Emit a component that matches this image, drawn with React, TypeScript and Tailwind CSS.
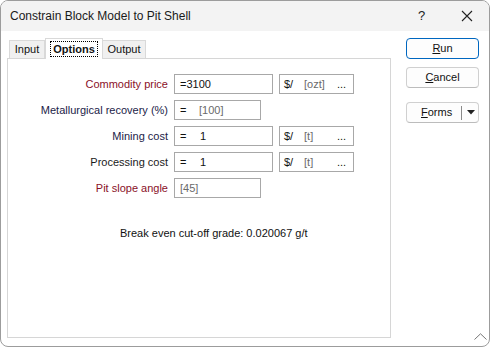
import React from "react";

const F = { fontFamily: '"Liberation Sans", Arial, sans-serif' };

function Row({ label, color, children }: { label: string; color: string; children: React.ReactNode }) {
  return (
    <div className="flex items-center h-[20px]">
      <div className={`w-[160px] text-right pr-[0px] text-[11px] leading-[13px] ${color}`}>{label}</div>
      <div className="flex ml-[6px] gap-[6px]">{children}</div>
    </div>
  );
}

function Box({ w, children }: { w: string; children: React.ReactNode }) {
  return (
    <div className={`${w} h-[20px] border border-[#a8a8a8] bg-white flex items-center text-[11px] leading-[13px] text-[#111]`}>
      {children}
    </div>
  );
}

function Unit({ u }: { u: string }) {
  return (
    <Box w="w-[75px]">
      <span className="ml-[4px] w-[20px]">$/</span>
      <span className="text-[#6a6a6a] w-[33px]">[{u}]</span>
      <span className="ml-[0px]">...</span>
    </Box>
  );
}

export default function App() {
  return (
    <div style={F} className="w-[490px] h-[347px] bg-white border border-[#9c9c9c] rounded-[8px] overflow-hidden flex flex-col relative text-[#111]">
      <div className="h-[30px] bg-[#f3f3f3] flex items-center pl-[9px] shrink-0 relative">
        <span className="text-[12px] leading-[14px] text-[#1a1a1a]">Constrain Block Model to Pit Shell</span>
        <span className="absolute left-[417px] top-[7px] text-[13px] leading-[15px] text-[#222]">?</span>
        <svg className="absolute left-[460px] top-[9px]" width="12" height="12" viewBox="0 0 12 12">
          <path d="M1 1 L11 11 M11 1 L1 11" stroke="#222" strokeWidth="1.1" />
        </svg>
      </div>
      <div className="flex flex-1">
        <div className="pl-[6px] pt-[7px]">
          <div className="flex items-end h-[20px] pl-[2px] relative z-10">
            <div className="h-[18px] w-[36px] bg-[#f0f0f0] border border-b-0 border-[#d9d9d9] flex items-center justify-center text-[11px]">Input</div>
            <div className="h-[21px] w-[58px] bg-white border border-b-0 border-[#d9d9d9] -mb-[1px] flex items-start justify-center pt-[2px]">
              <span className="border border-dotted border-black px-[2px] h-[16px] leading-[14px] text-[11px] font-bold">Options</span>
            </div>
            <div className="h-[18px] w-[43px] bg-[#f0f0f0] border border-b-0 border-l-0 border-[#d9d9d9] flex items-center justify-center text-[11px]">Output</div>
          </div>
          <div className="w-[384px] h-[280px] border border-[#d6d6d6] bg-white pt-[15px] flex flex-col">
            <div className="flex flex-col gap-[6px]">
              <Row label="Commodity price" color="text-[#8a1028]">
                <Box w="w-[99px]"><span className="ml-[5px]">=3100</span></Box>
                <Unit u="ozt" />
              </Row>
              <Row label="Metallurgical recovery (%)" color="text-[#1c1c48]">
                <Box w="w-[87px]"><span className="ml-[5px] w-[19px]">=</span><span className="text-[#6a6a6a]">[100]</span></Box>
              </Row>
              <Row label="Mining cost" color="text-[#1c1c48]">
                <Box w="w-[99px]"><span className="ml-[5px] w-[20px]">=</span><span>1</span></Box>
                <Unit u="t" />
              </Row>
              <Row label="Processing cost" color="text-[#1a1a1a]">
                <Box w="w-[99px]"><span className="ml-[5px] w-[20px]">=</span><span>1</span></Box>
                <Unit u="t" />
              </Row>
              <Row label="Pit slope angle" color="text-[#8a1028]">
                <Box w="w-[87px]"><span className="ml-[5px] text-[#6a6a6a]">[45]</span></Box>
              </Row>
            </div>
            <div className="mt-[29px] ml-[112px] text-[11px] leading-[13px] text-[#111]">Break even cut-off grade: 0.020067 g/t</div>
          </div>
        </div>
        <div className="ml-[15px] pt-[7px] flex flex-col">
          <div className="w-[73px] h-[21px] border border-[#0067c0] rounded-[4px] bg-[#fdfdfd] flex items-center justify-center text-[11px]">
            <span><span className="underline">R</span>un</span>
          </div>
          <div className="mt-[8px] w-[73px] h-[21px] border border-[#d0d0d0] border-b-[#bcbcbc] rounded-[4px] bg-[#fdfdfd] flex items-center justify-center text-[11px]">
            <span><span className="underline">C</span>ancel</span>
          </div>
          <div className="mt-[14px] w-[73px] h-[21px] border border-[#d0d0d0] border-b-[#bcbcbc] rounded-[4px] bg-[#fdfdfd] flex items-center text-[11px]">
            <span className="ml-[14px] w-[40px]"><span className="underline">F</span>orms</span>
            <div className="w-[1px] h-[14px] bg-[#8a8a8a]" />
            <svg className="ml-[5px]" width="8" height="5" viewBox="0 0 8 5">
              <path d="M0 0 L8 0 L4 4.5 Z" fill="#222" />
            </svg>
          </div>
        </div>
      </div>
      <svg className="absolute left-[473px] top-[332px]" width="13" height="7" viewBox="0 0 13 7">
        <path d="M0.5 6.5 L6.5 0.8 L12.5 6.5" stroke="#777" strokeWidth="1" fill="none" />
      </svg>
    </div>
  );
}
